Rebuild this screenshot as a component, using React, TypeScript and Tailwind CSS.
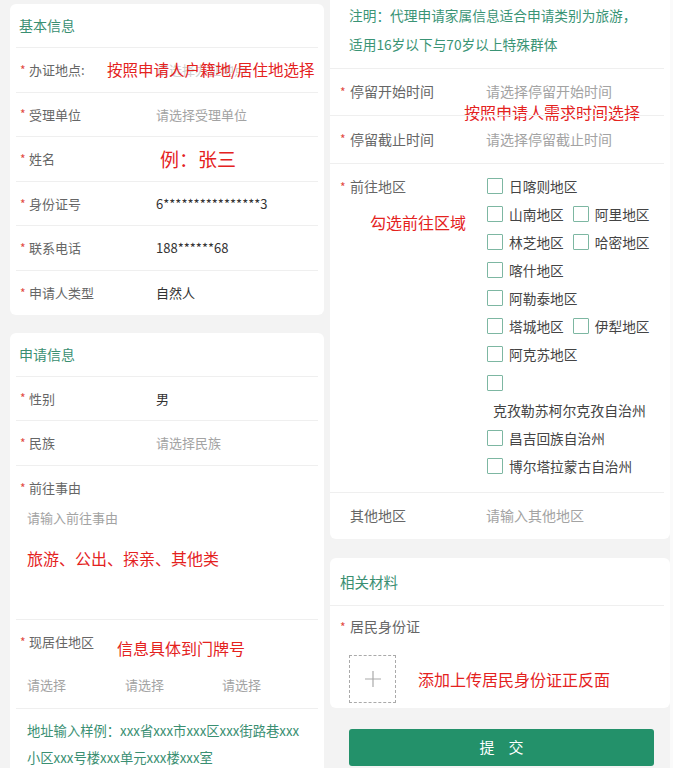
import React from 'react';

const FONT = { fontFamily: '"Noto Sans CJK SC", "Noto Sans", sans-serif' };

function Star() {
  return <span className="inline-block w-[9px] text-[12px] text-[#e24a42]">*</span>;
}

// 左栏一行：星号 + 标签 + 值
function LRow({
  label,
  star = true,
  children,
}: {
  label: string;
  star?: boolean;
  children?: React.ReactNode;
}) {
  return (
    <div className="relative mx-[6px] flex h-[44.6px] items-center border-t border-[#efefef] pl-[4px] text-[13px]">
      <div className="flex w-[136px] items-center text-[#666]">
        {star ? <Star /> : <span className="w-[9px]" />}
        <span>{label}</span>
      </div>
      <div>{children}</div>
    </div>
  );
}

function RRow({
  label,
  star = true,
  children,
}: {
  label: string;
  star?: boolean;
  children?: React.ReactNode;
}) {
  return (
    <div className="relative mr-[6px] flex h-[47.5px] items-center border-t border-[#efefef] pl-[10px] text-[14px]">
      <div className="flex w-[146px] items-center text-[#666]">
        {star ? <span className="inline-block w-[10px] text-[12px] text-[#e24a42]">*</span> : <span className="w-[10px]" />}
        <span>{label}</span>
      </div>
      <div>{children}</div>
    </div>
  );
}

function Box() {
  return <span className="inline-block h-[16px] w-[16px] shrink-0 rounded-[1px] border-[1.5px] border-[#7db7a2] bg-white" />;
}

function Check({ text }: { text: string }) {
  return (
    <div className="flex items-center gap-[6px]">
      <Box />
      <span className="text-[13.7px] text-[#444]">{text}</span>
    </div>
  );
}

const regions: string[][] = [
  ['日喀则地区'],
  ['山南地区', '阿里地区'],
  ['林芝地区', '哈密地区'],
  ['喀什地区'],
  ['阿勒泰地区'],
  ['塔城地区', '伊犁地区'],
  ['阿克苏地区'],
];

const red = 'text-[#e4221e]';
const ph = 'text-[#a3a3a3]';

export default function App() {
  return (
    <div style={FONT} className="flex h-[768px] w-[673px] overflow-hidden bg-[#f3f3f3]">
      {/* 左栏 */}
      <div className="flex w-[327px] shrink-0 flex-col gap-[18px] pl-[10px] pr-[3px] pt-[4px]">
        <div className="rounded-[6px] bg-white">
          <div className="flex h-[43px] items-center pl-[9px] text-[14px] text-[#3a8f72]">基本信息</div>
          <LRow label="办证地点:">
            <span className="text-[#d0d0d0]">请选择办证地点</span>
            <span className={`absolute left-[91px] top-1/2 -translate-y-1/2 text-[15.5px] ${red}`}>
              按照申请人户籍地/居住地选择
            </span>
          </LRow>
          <LRow label="受理单位">
            <span className={ph}>请选择受理单位</span>
          </LRow>
          <LRow label="姓名">
            <span className={`ml-[4px] text-[19px] ${red}`}>例：张三</span>
          </LRow>
          <LRow label="身份证号">
            <span className="text-[#333]">6****************3</span>
          </LRow>
          <LRow label="联系电话">
            <span className="text-[#333]">188******68</span>
          </LRow>
          <LRow label="申请人类型">
            <span className="text-[#333]">自然人</span>
          </LRow>
        </div>

        <div className="flex-1 rounded-t-[6px] bg-white">
          <div className="flex h-[43px] items-center pl-[9px] text-[14px] text-[#3a8f72]">申请信息</div>
          <LRow label="性别">
            <span className="text-[#333]">男</span>
          </LRow>
          <LRow label="民族">
            <span className={ph}>请选择民族</span>
          </LRow>
          <div className="mx-[6px] h-[154px] border-t border-[#efefef] text-[13px]">
            <div className="flex h-[44px] items-center pl-[4px] text-[#666]">
              <Star />
              <span>前往事由</span>
            </div>
            <div className={`pl-[11px] leading-[16px] ${ph}`}>请输入前往事由</div>
            <div className={`mt-[22px] pl-[11px] text-[16px] leading-[20px] ${red}`}>旅游、公出、探亲、其他类</div>
          </div>
          <div className="relative mx-[6px] h-[89px] border-t border-[#efefef] text-[13px]">
            <div className="flex h-[44px] items-center pl-[4px] text-[#666]">
              <Star />
              <span>现居住地区</span>
            </div>
            <span className={`absolute left-[101px] top-[18px] text-[16px] leading-[20px] ${red}`}>信息具体到门牌号</span>
            <div className={`mt-[11px] flex pl-[11px] ${ph}`}>
              <span className="w-[98px]">请选择</span>
              <span className="w-[97px]">请选择</span>
              <span>请选择</span>
            </div>
          </div>
          <div className="mx-[6px] border-t border-[#efefef] pl-[11px] pt-[8px] text-[13.3px] leading-[27px] text-[#3a8f72]">
            地址输入样例：xxx省xxx市xxx区xxx街路巷xxx
            <br />
            小区xxx号楼xxx单元xxx楼xxx室
          </div>
        </div>
      </div>

      {/* 右栏 */}
      <div className="flex w-[343px] shrink-0 flex-col pl-[3px]">
        <div className="relative rounded-b-[6px] bg-white">
          <div className="pb-[9px] pl-[19px] pt-[0.5px] text-[13.7px] leading-[29px] text-[#3a9475]">
            注明：代理申请家属信息适合申请类别为旅游，
            <br />
            适用16岁以下与70岁以上特殊群体
          </div>
          <RRow label="停留开始时间">
            <span className={ph}>请选择停留开始时间</span>
          </RRow>
          <span className={`absolute left-[134px] top-[102px] text-[16px] leading-[20px] ${red}`}>按照申请人需求时间选择</span>
          <RRow label="停留截止时间">
            <span className={ph}>请选择停留截止时间</span>
          </RRow>
          <div className="relative mr-[6px] flex h-[329px] border-t border-[#efefef] pl-[10px] text-[14px]">
            <div className="flex h-[46px] w-[146px] items-center text-[#666]">
              <span className="inline-block w-[10px] text-[12px] text-[#e24a42]">*</span>
              <span>前往地区</span>
            </div>
            <span className={`absolute left-[40px] top-[48px] text-[16px] leading-[20px] ${red}`}>勾选前往区域</span>
            <div className="flex flex-col pl-[1px] pt-[9px]">
              {regions.map((r, i) => (
                <div key={i} className="flex h-[28px] items-center gap-[9px]">
                  {r.map((t) => (
                    <Check key={t} text={t} />
                  ))}
                </div>
              ))}
              <div className="flex h-[28px] items-center">
                <Box />
              </div>
              <div className="flex h-[28px] items-center pl-[6px] text-[13.9px] text-[#444]">克孜勒苏柯尔克孜自治州</div>
              <div className="flex h-[28px] items-center">
                <Check text="昌吉回族自治州" />
              </div>
              <div className="flex h-[28px] items-center">
                <Check text="博尔塔拉蒙古自治州" />
              </div>
            </div>
          </div>
          <RRow label="其他地区" star={false}>
            <span className={ph}>请输入其他地区</span>
          </RRow>
        </div>

        <div className="mt-[19px] rounded-[6px] bg-white pb-[5px]">
          <div className="flex h-[47px] items-center pl-[10px] text-[14.5px] text-[#3a8f72]">相关材料</div>
          <div className="mr-[6px] border-t border-[#efefef]">
            <div className="flex h-[41px] items-center pl-[10px] text-[14px] text-[#666]">
              <span className="inline-block w-[10px] text-[12px] text-[#e24a42]">*</span>
              <span>居民身份证</span>
            </div>
            <div className="mt-[8px] flex items-center pl-[19px]">
              <div className="flex h-[48px] w-[47px] items-center justify-center border border-dashed border-[#aaa]">
                <svg width="18" height="18" viewBox="0 0 18 18">
                  <path d="M9 1v16M1 9h16" stroke="#aaa" strokeWidth="1.2" />
                </svg>
              </div>
              <span className={`ml-[22px] text-[16px] ${red}`}>添加上传居民身份证正反面</span>
            </div>
          </div>
        </div>

        <button className="ml-[19px] mt-[21px] flex h-[37px] w-[305px] items-center justify-center gap-[14px] rounded-[3px] bg-[#23916a] text-[15px] text-white">
          <span>提</span>
          <span>交</span>
        </button>
      </div>
      <div className="w-[3px] bg-[#fafafa]" />
    </div>
  );
}
